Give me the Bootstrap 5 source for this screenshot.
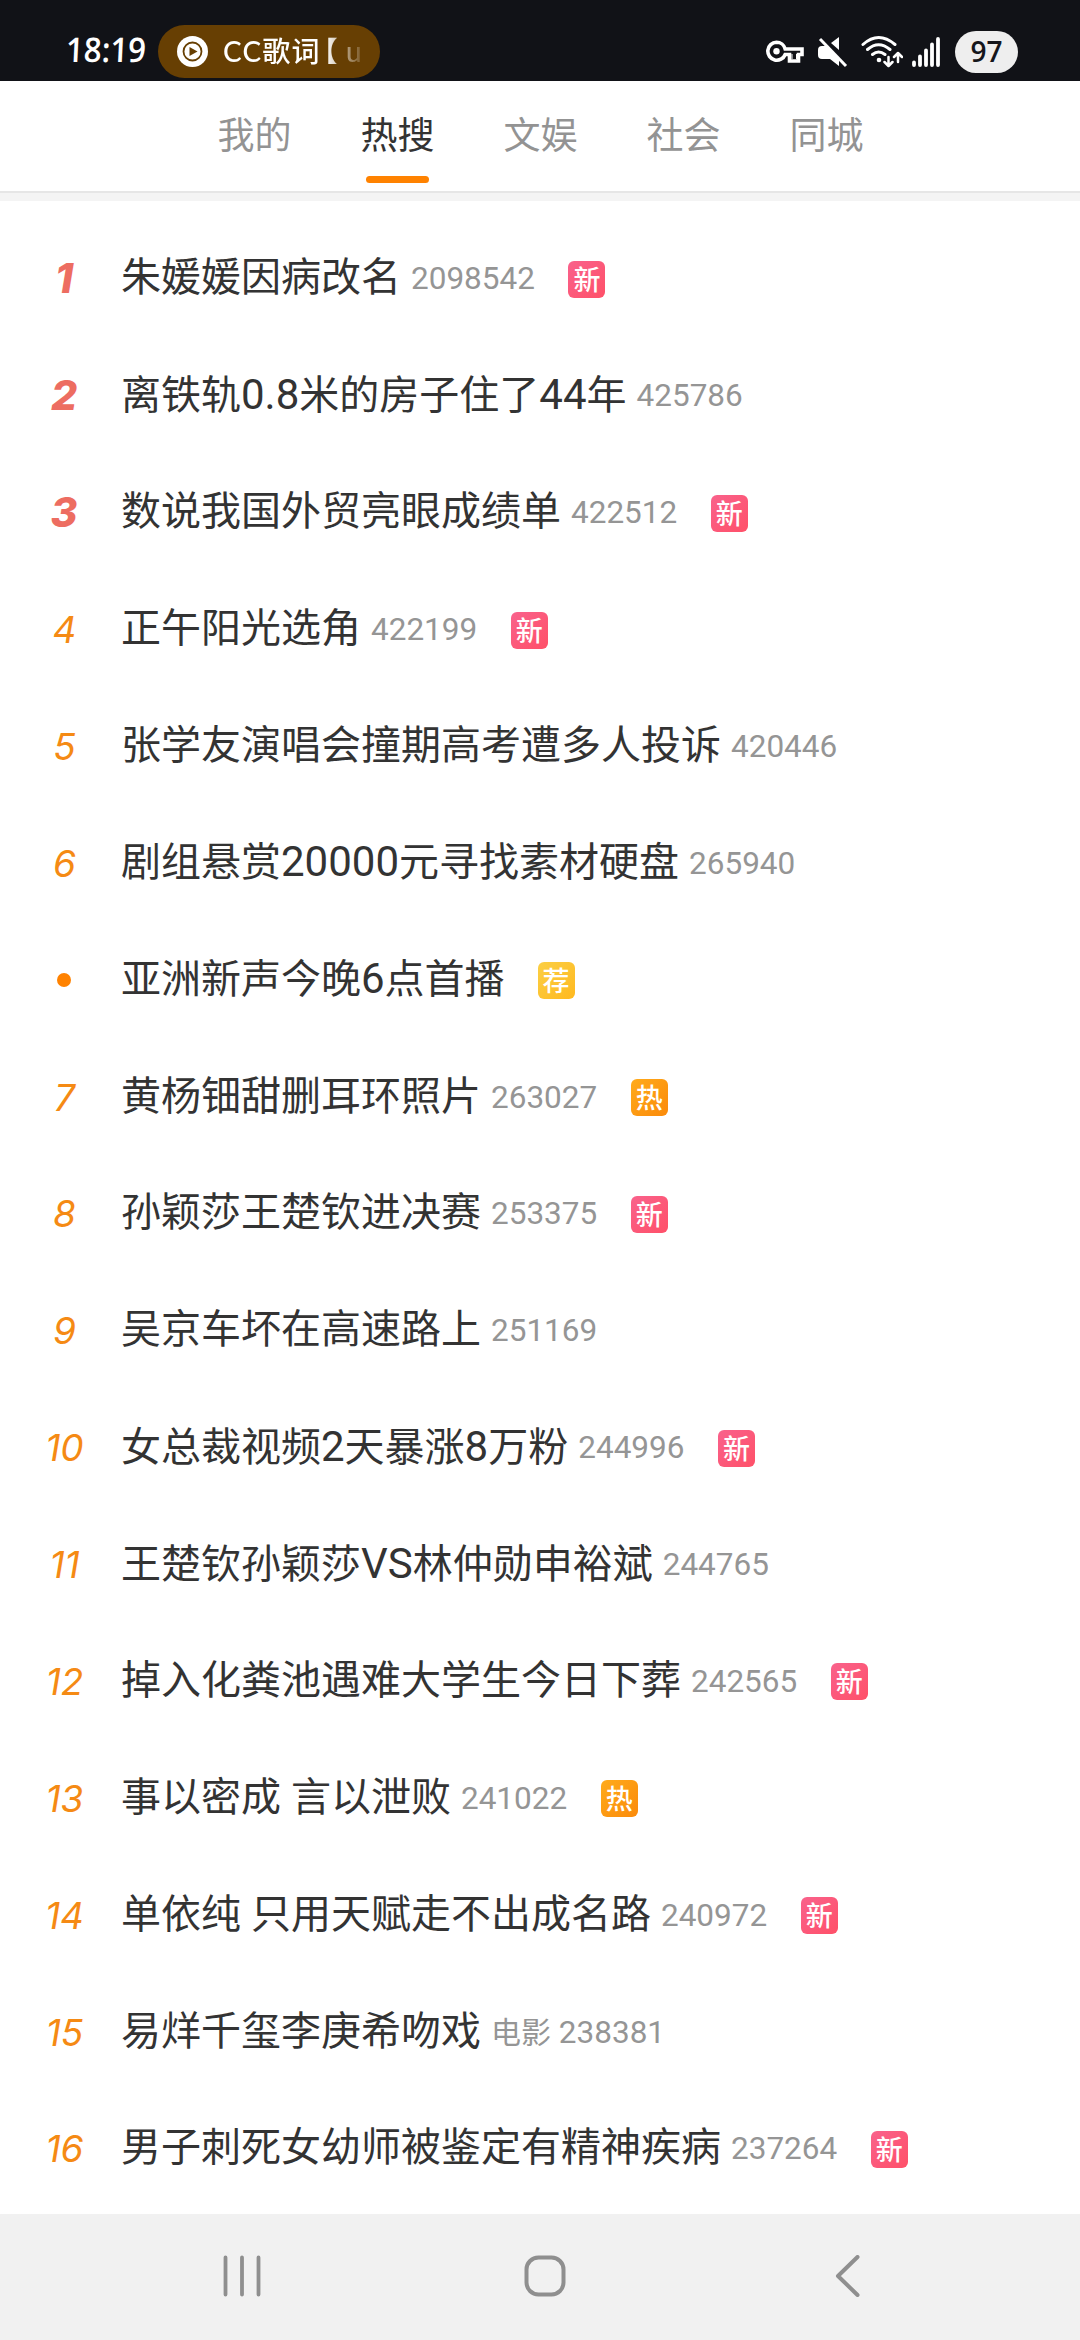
<!DOCTYPE html>
<html lang="zh-CN">
<head>
<meta charset="utf-8">
<meta name="viewport" content="width=device-width, initial-scale=1">
<title>热搜</title>
<link href="https://cdn.jsdelivr.net/npm/bootstrap@5.3.0/dist/css/bootstrap.min.css" rel="stylesheet">
<style>
body{width:1080px;height:2340px;overflow:hidden;background:#fff;font-family:Roboto,"Noto Sans CJK SC",sans-serif;color:#333;line-height:1}
svg{display:block;flex:none}
.statusbar{height:81px;background:#111217;color:#fff;padding:25px 62px 0 66px}
.clock{width:92px;height:53px;font:600 34px/48px "Open Sans",sans-serif;white-space:nowrap}
.clock span{display:inline-block;transform:scaleX(.92) skewX(-3deg);transform-origin:0 50%}
.media-pill{width:222px;height:53px;background:#673f03;padding-left:19px}
.media-text{width:142px;margin-left:15px;font:500 28px/53px Lato,"Noto Sans CJK SC",sans-serif;letter-spacing:1.2px;white-space:nowrap;-webkit-mask-image:linear-gradient(90deg,#000 72%,transparent 102%);mask-image:linear-gradient(90deg,#000 72%,transparent 102%)}
.bracket{margin-left:3px;margin-right:7px;font-feature-settings:"halt"}
.battery{width:63px;height:42px;margin-left:15px;background:#eee;color:#15161b;font:600 28px/41px "Open Sans",sans-serif}
.ic-mute{margin-left:14px}
.ic-wifi{margin-left:13px}
.ic-signal{margin-left:9px}
.status-icons{height:53px}
.tabs{height:112px;border-bottom:2px solid #e6e6e6;gap:69px;padding-left:1px}
.tab-item{width:74px;font-size:37px;line-height:112px;height:110px;color:#939393;white-space:nowrap}
.tab-item.active{color:#333}
.tab-item.active::after{content:"";position:absolute;left:5px;top:95px;width:63px;height:7px;border-radius:4px;background:#ff8200}
.band{height:8px;background:#f4f4f4}
.hotlist{height:2013px;padding-top:20px}
.hot-row{height:116.875px}
.rank{width:121px;padding-left:8px;font:italic 400 37px/1 Inter,sans-serif;color:#f58a14;margin-top:-1px}
.rank.top{padding-left:7px;font-size:41px;font-weight:800;color:#ed6d61}
.rank.promo{padding-left:6px}
.dot{width:14px;height:14px;background:#ff8200}
.topic{font-size:40px;line-height:60px;white-space:pre;margin-top:-2px}
.topic b,.heat b{font-weight:400;font-size:1.05em}
.heat{font-size:30px;line-height:44px;color:#959595;margin:0 .5px 0 10px;white-space:pre}
.tag{width:37px;height:37px;border-radius:6px;margin-left:33px;color:#fff;font:500 27px/36px "Noto Sans CJK SC",sans-serif}
.t-new{background:linear-gradient(135deg,#f9628c,#ff5068)}
.t-hot{background:linear-gradient(135deg,#ffab1b,#fb8a0a)}
.t-rec{background:linear-gradient(135deg,#fbcf45,#ffb91f)}
.navkeys{height:126px;background:#f1f1f1;padding:0 219px 2px 222px}
.key-home{margin-right:7px}
</style>
<script src="https://cdn.jsdelivr.net/npm/bootstrap@5.3.0/dist/js/bootstrap.bundle.min.js"></script>
</head>
<body class="d-flex flex-column">
<header class="statusbar d-flex align-items-start">
  <div class="clock"><span>18:19</span></div>
  <div class="media-pill rounded-pill d-flex align-items-center">
    <svg width="31" height="31" viewBox="0 0 31 31"><circle cx="15.5" cy="15.5" r="15.5" fill="#fff"/><circle cx="15.5" cy="15.5" r="9" fill="none" stroke="#673f03" stroke-width="1.8"/><path d="M12.5 11v9l8-4.500z" fill="#673f03"/></svg>
    <div class="media-text">CC歌词<span class="bracket">【</span>u</div>
  </div>
  <div class="status-icons d-flex align-items-center ms-auto">
    <svg width="38" height="24" viewBox="0 0 38 24"><path d="M10.500 2.200a9 9 0 1 0 8.700 12.300H23.500v6.500h9v-6.500h3.500V9H19.200A9 9 0 0 0 10.500 2.200z" fill="none" stroke="#fff" stroke-width="3.600"/><circle cx="10.500" cy="11.300" r="3.200" fill="#fff"/><path d="M26 14v5M30.500 14v5" stroke="#fff" stroke-width="1"/></svg>
    <svg class="ic-mute" width="30" height="32" viewBox="0 0 30 32"><path d="M4 10h4l13 13v7L12 23H4q-4 0-4-4v-5q0-4 4-4zM13 7l8-6v13z" fill="#fff"/><path d="M4 1l25 28" stroke="#111217" stroke-width="3"/><path d="M2 3l26 27" stroke="#fff" stroke-width="3"/></svg>
    <svg class="ic-wifi" width="42" height="33" viewBox="0 0 42 33"><g fill="none" stroke="#fff" stroke-linecap="round" stroke-width="3"><path d="M2 9.500Q17.500-4.500 34 9.500M6.500 14.500Q17.500 5 29 14.500M11.500 19.500Q17.500 14.500 24 19.500"/><path d="M27.500 22v8M23.500 27l4 4 4-4M37 27v-8M33 22l4-4 4 4" stroke-width="2.500" stroke-linejoin="round"/></g><circle cx="18" cy="25" r="2.300" fill="#fff"/></svg>
    <svg class="ic-signal" width="28" height="30" viewBox="0 0 28 30"><path d="M2 25.500v2.500M8 19.500V28M14 13.500V28M20 7.500V28M26 2v26" stroke="#fff" stroke-width="3.800" stroke-linecap="round"/></svg>
    <div class="battery rounded-pill text-center">97</div>
  </div>
</header>
<nav class="tabs d-flex justify-content-center flex-shrink-0">
  <div class="tab-item">我的</div>
  <div class="tab-item active position-relative">热搜</div>
  <div class="tab-item">文娱</div>
  <div class="tab-item">社会</div>
  <div class="tab-item">同城</div>
</nav>
<div class="band flex-shrink-0"></div>
<main class="hotlist flex-shrink-0">
  <div class="hot-row d-flex align-items-center"><div class="rank top text-center">1</div><div class="topic">朱媛媛因病改名</div><div class="heat"><b>2098542</b></div><div class="tag t-new text-center">新</div></div>
  <div class="hot-row d-flex align-items-center"><div class="rank top text-center">2</div><div class="topic">离铁轨<b>0.8</b>米的房子住了<b>44</b>年</div><div class="heat"><b>425786</b></div></div>
  <div class="hot-row d-flex align-items-center"><div class="rank top text-center">3</div><div class="topic">数说我国外贸亮眼成绩单</div><div class="heat"><b>422512</b></div><div class="tag t-new text-center">新</div></div>
  <div class="hot-row d-flex align-items-center"><div class="rank text-center">4</div><div class="topic">正午阳光选角</div><div class="heat"><b>422199</b></div><div class="tag t-new text-center">新</div></div>
  <div class="hot-row d-flex align-items-center"><div class="rank text-center">5</div><div class="topic">张学友演唱会撞期高考遭多人投诉</div><div class="heat"><b>420446</b></div></div>
  <div class="hot-row d-flex align-items-center"><div class="rank text-center">6</div><div class="topic">剧组悬赏<b>20000</b>元寻找素材硬盘</div><div class="heat"><b>265940</b></div></div>
  <div class="hot-row d-flex align-items-center"><div class="rank promo d-flex justify-content-center"><div class="dot rounded-circle"></div></div><div class="topic">亚洲新声今晚<b>6</b>点首播</div><div class="tag t-rec text-center">荐</div></div>
  <div class="hot-row d-flex align-items-center"><div class="rank text-center">7</div><div class="topic">黄杨钿甜删耳环照片</div><div class="heat"><b>263027</b></div><div class="tag t-hot text-center">热</div></div>
  <div class="hot-row d-flex align-items-center"><div class="rank text-center">8</div><div class="topic">孙颖莎王楚钦进决赛</div><div class="heat"><b>253375</b></div><div class="tag t-new text-center">新</div></div>
  <div class="hot-row d-flex align-items-center"><div class="rank text-center">9</div><div class="topic">吴京车坏在高速路上</div><div class="heat"><b>251169</b></div></div>
  <div class="hot-row d-flex align-items-center"><div class="rank text-center">10</div><div class="topic">女总裁视频<b>2</b>天暴涨<b>8</b>万粉</div><div class="heat"><b>244996</b></div><div class="tag t-new text-center">新</div></div>
  <div class="hot-row d-flex align-items-center"><div class="rank text-center">11</div><div class="topic">王楚钦孙颖莎<b>VS</b>林仲勋申裕斌</div><div class="heat"><b>244765</b></div></div>
  <div class="hot-row d-flex align-items-center"><div class="rank text-center">12</div><div class="topic">掉入化粪池遇难大学生今日下葬</div><div class="heat"><b>242565</b></div><div class="tag t-new text-center">新</div></div>
  <div class="hot-row d-flex align-items-center"><div class="rank text-center">13</div><div class="topic">事以密成 言以泄败</div><div class="heat"><b>241022</b></div><div class="tag t-hot text-center">热</div></div>
  <div class="hot-row d-flex align-items-center"><div class="rank text-center">14</div><div class="topic">单依纯 只用天赋走不出成名路</div><div class="heat"><b>240972</b></div><div class="tag t-new text-center">新</div></div>
  <div class="hot-row d-flex align-items-center"><div class="rank text-center">15</div><div class="topic">易烊千玺李庚希吻戏</div><div class="heat">电影<b> 238381</b></div></div>
  <div class="hot-row d-flex align-items-center"><div class="rank text-center">16</div><div class="topic">男子刺死女幼师被鉴定有精神疾病</div><div class="heat"><b>237264</b></div><div class="tag t-new text-center">新</div></div>
</main>
<footer class="navkeys d-flex justify-content-between align-items-center flex-shrink-0">
  <svg width="40" height="42" viewBox="0 0 40 42"><path d="M3.500 2.500v37M20 2.500v37M36.500 2.500v37" stroke="#8f8f8f" stroke-width="3.800" stroke-linecap="round"/></svg>
  <svg class="key-home" width="42" height="42" viewBox="0 0 42 42"><rect x="2.500" y="2.500" width="37" height="37" rx="12" fill="none" stroke="#8f8f8f" stroke-width="4"/></svg>
  <svg width="26" height="42" viewBox="0 0 26 42"><path d="M22.500 2L3 21l19.500 19" fill="none" stroke="#8f8f8f" stroke-width="4" stroke-linecap="round" stroke-linejoin="round"/></svg>
</footer>
</body>
</html>
